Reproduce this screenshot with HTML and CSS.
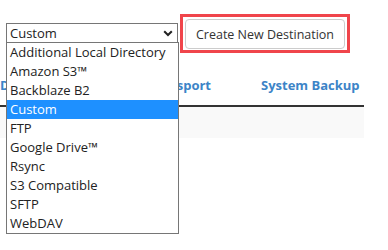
FILE: index.html
```html
<!DOCTYPE html>
<html>
<head>
<meta charset="utf-8">
<link rel="stylesheet" href="styles.css">
</head>
<body>
<div class="page">
  <div class="toolbar">
    <div class="picker">
      <div class="select">
        <span class="select-value">Custom</span>
        <svg class="chevron" width="10" height="7" viewBox="0 0 10 7"><path d="M1.2 1.2 L5 5 L8.8 1.2" fill="none" stroke="#222" stroke-width="2"/></svg>
      </div>
      <ul class="options">
        <li>Additional Local Directory</li>
        <li>Amazon S3™</li>
        <li>Backblaze B2</li>
        <li class="selected">Custom</li>
        <li>FTP</li>
        <li>Google Drive™</li>
        <li>Rsync</li>
        <li>S3 Compatible</li>
        <li>SFTP</li>
        <li>WebDAV</li>
      </ul>
    </div>
    <div class="highlight">
      <button class="create">Create New Destination</button>
    </div>
  </div>
  <nav class="tabs">
    <a class="tab">Destinations</a>
    <a class="tab">File Transport</a>
    <a class="tab">System Backup</a>
  </nav>
  <div class="panel"></div>
</div>
</body>
</html>
```
FILE: styles.css
```css
* { box-sizing: border-box; }
html, body { margin: 0; padding: 0; background: #fff; }
body { font-family: "Open Sans", "Liberation Sans", sans-serif; color: #333; }
.page { width: 388px; height: 250px; overflow: hidden; position: relative; }
.toolbar { display: flex; align-items: flex-start; padding: 14px 0 0 6px; gap: 2px; }
.picker { position: relative; margin-top: 9px; }
.select { width: 172px; height: 20px; border: 1px solid #767676; display: flex; align-items: center; justify-content: space-between; padding: 0 4px 0 3px; font-size: 13px; color: #222; background: #fff; }
.select-value { line-height: 18px; }
.chevron { margin-top: 1px; }
.options { position: absolute; z-index: 5; left: 0; top: 19px; width: 173px; margin: 0; padding: 0; list-style: none; border: 1px solid #767676; background: #fff; }
.options li { height: 19px; line-height: 19px; font-size: 13px; padding-left: 3px; color: #222; white-space: nowrap; }
.options li.selected { background: #1e90ff; color: #fff; }
.highlight { border: 3px solid #f0454b; padding: 2px 2px 1px 2px; }
.create { font-family: inherit; font-size: 12.5px; color: #333; background: #fff; border: 1px solid #ccc; border-radius: 4px; height: 30px; width: 160px; padding: 0; margin: 0; }
.tabs { display: flex; margin-top: 23px; height: 29px; align-items: flex-start; }
.tab { font-weight: bold; font-size: 13px; color: #3c84c7; line-height: 18px; }
.tab:nth-child(1) { width: 110px; }
.tab:nth-child(2) { width: 151px; text-align: right; margin-right: 50px; margin-left: -50px; }
.panel { width: 364px; height: 33px; border-top: 2px solid #333; background: #f9f9f9; margin-top: 0; }
```
